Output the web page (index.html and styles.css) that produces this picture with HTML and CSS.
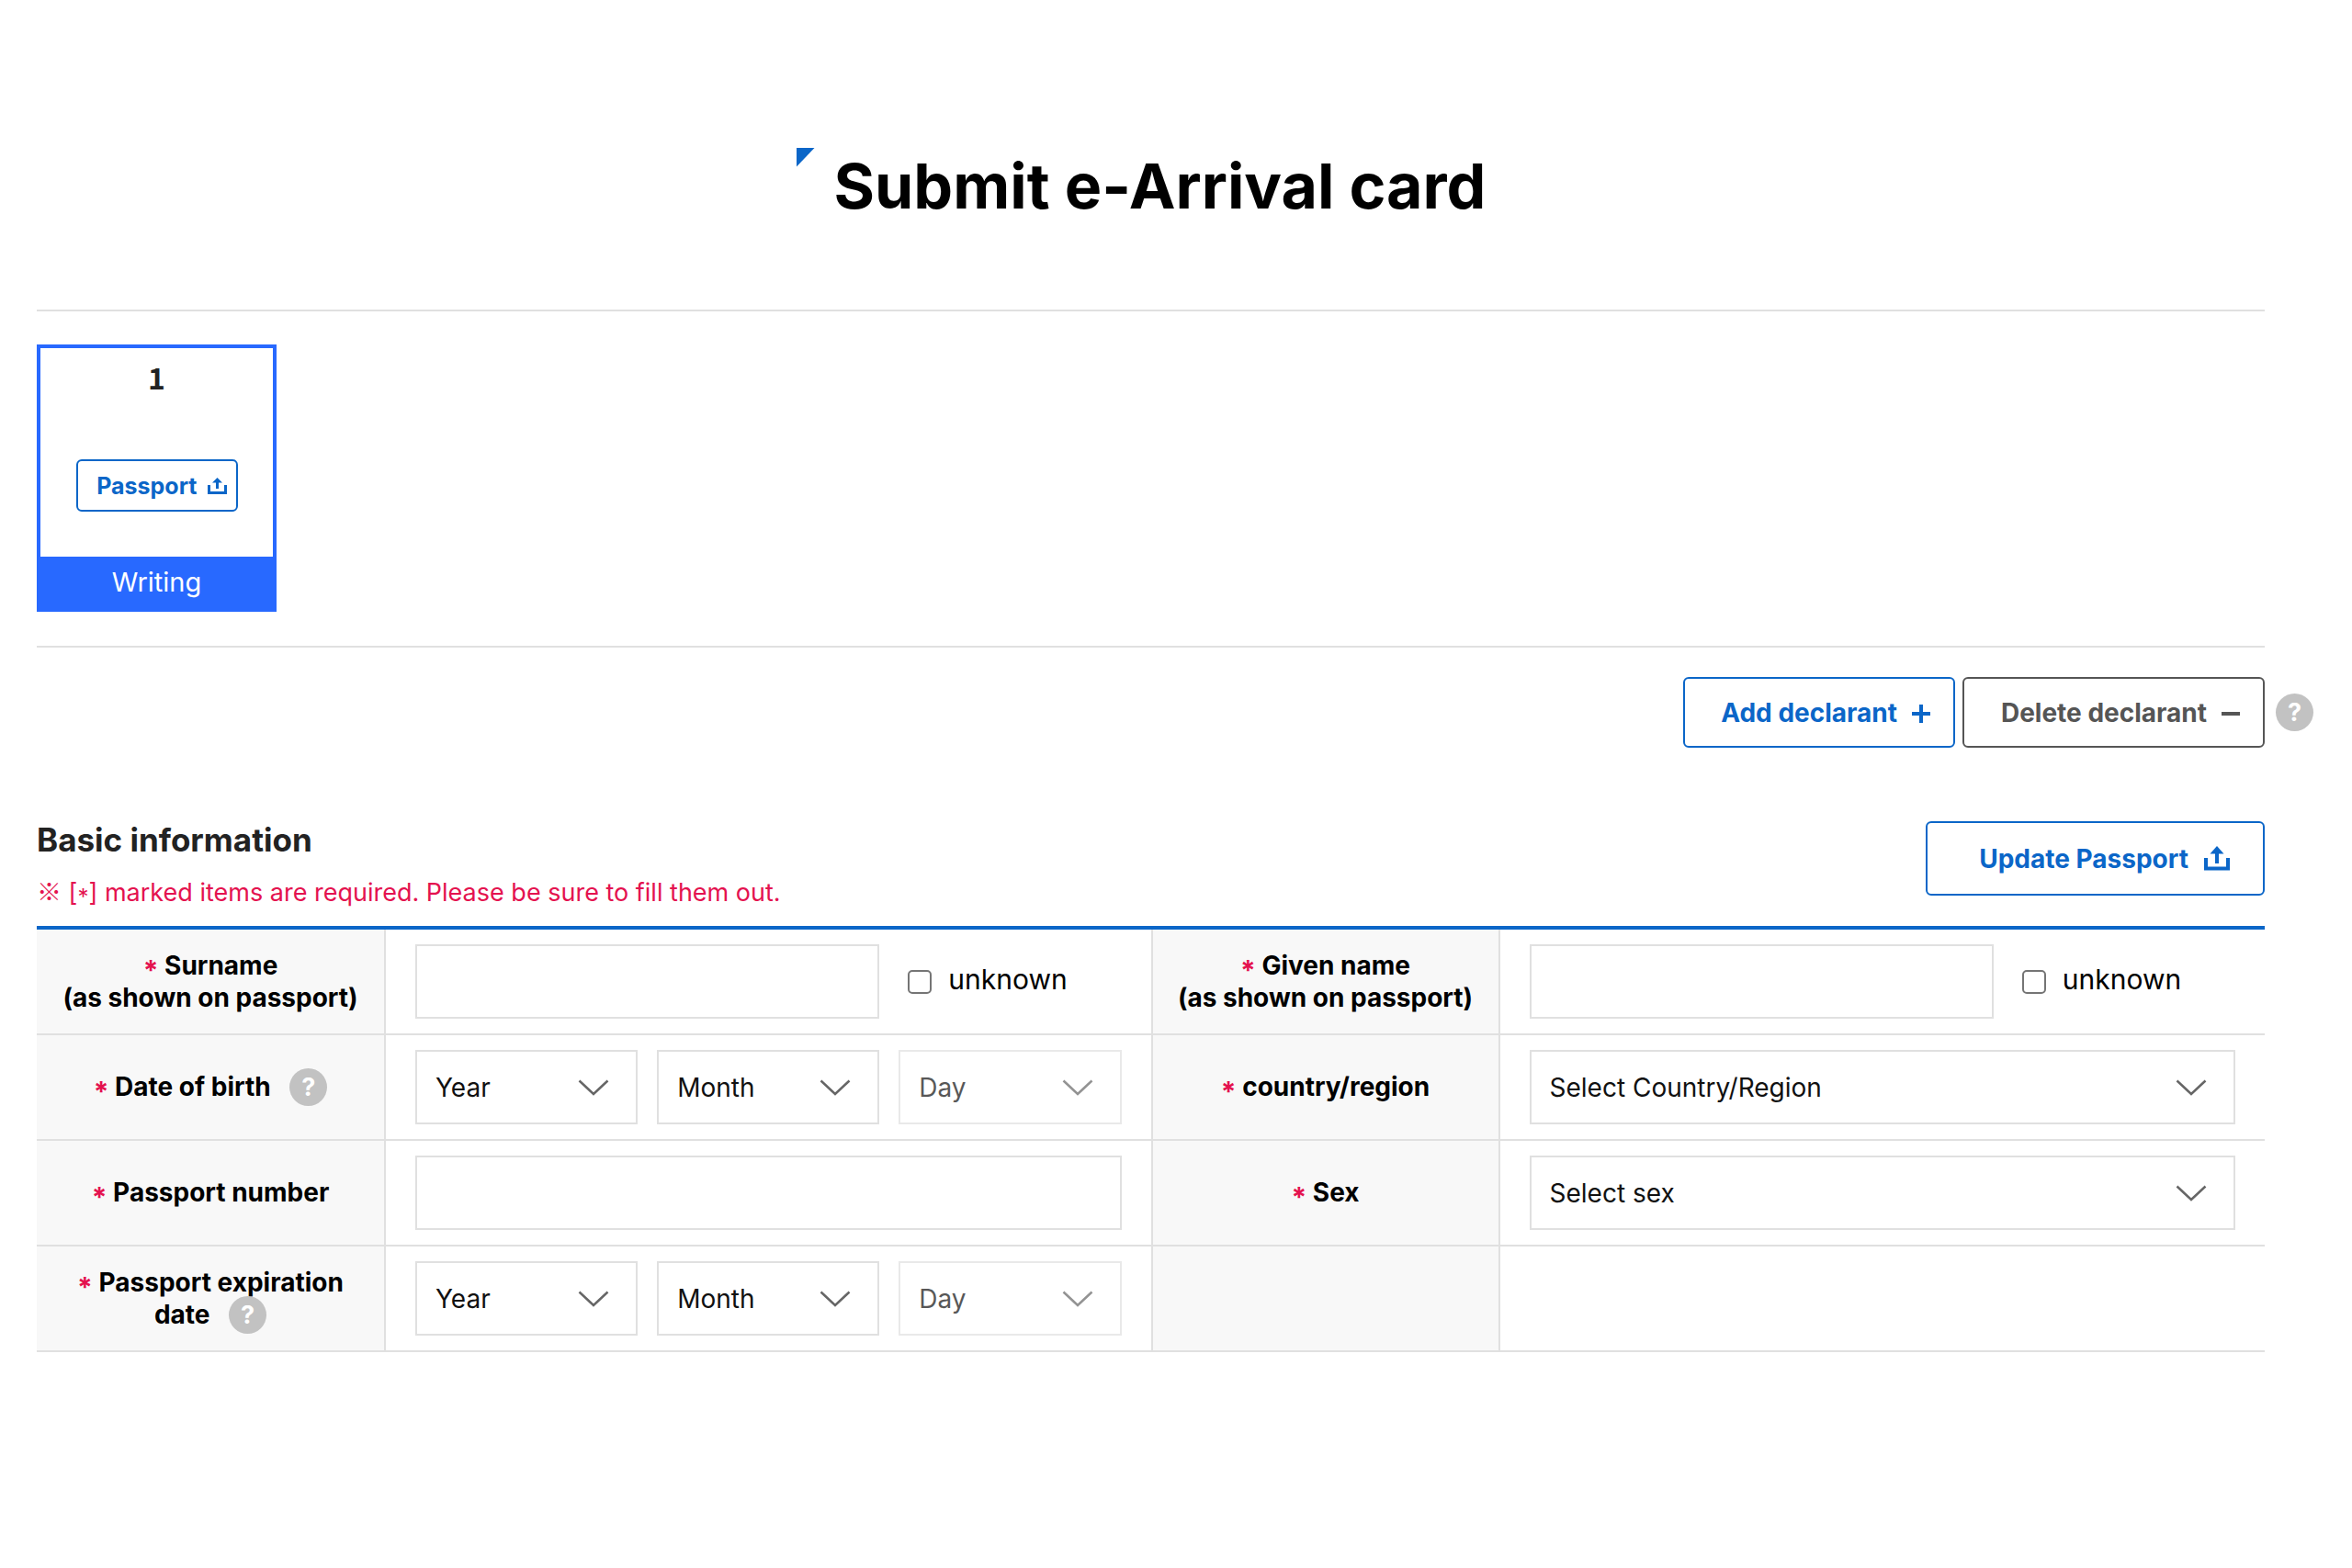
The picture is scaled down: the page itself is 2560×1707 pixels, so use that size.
FILE: index.html
```html
<!DOCTYPE html>
<html lang="en">
<head>
<meta charset="utf-8">
<meta name="viewport" content="width=device-width, initial-scale=1">
<title>Submit e-Arrival card</title>
<link rel="stylesheet" href="styles.css">
</head>
<body>
<main class="page">
  <header class="page-header">
    <h1 class="page-title">Submit e-Arrival card</h1>
  </header>

  <section class="declarants">
    <article class="declarant">
      <div class="declarant-body">
        <strong class="declarant-number">1</strong>
        <button type="button" class="btn btn-small">Passport
          <svg class="icon-upload-small" viewBox="0 0 21 18" aria-hidden="true"><path d="M1.5 8v8.500h18V8M10.500 12V3" fill="none" stroke="currentColor" stroke-width="3"/><path d="M5 5.500 10.500 0 16 5.500z" fill="currentColor"/></svg>
        </button>
      </div>
      <p class="declarant-status">Writing</p>
    </article>
  </section>

  <div class="toolbar">
    <button type="button" class="btn btn-add">Add declarant
      <svg class="icon-sign" viewBox="0 0 22 22" aria-hidden="true"><path d="M1 12h20M11 2v20" stroke="currentColor" stroke-width="4"/></svg>
    </button>
    <button type="button" class="btn btn-delete">Delete declarant
      <svg class="icon-sign" viewBox="0 0 22 22" aria-hidden="true"><path d="M1 12h20" stroke="currentColor" stroke-width="4"/></svg>
    </button>
    <button type="button" class="help" aria-label="Help with declarants">?</button>
  </div>

  <form>
    <div class="section-head">
      <div>
        <h2 class="section-title">Basic information</h2>
        <p class="section-note"><span class="note-mark">※</span> [<span class="note-star">*</span>] marked items are required. Please be sure to fill them out.</p>
      </div>
      <button type="button" class="btn btn-update">Update Passport
        <svg class="icon-upload" viewBox="0 0 30 28" aria-hidden="true"><path d="M3 13v11.500h24V13M15 19V4" fill="none" stroke="currentColor" stroke-width="4"/><path d="M7.500 8.500 15 0l7.500 8.500z" fill="currentColor"/></svg>
      </button>
    </div>

    <table class="form-table">
      <colgroup><col class="col-label"><col><col class="col-label"><col></colgroup>
      <tbody>
        <tr>
          <th scope="row"><label for="surname"><span class="star">*</span> Surname<br>(as shown on passport)</label></th>
          <td>
            <div class="fields">
              <input type="text" id="surname" class="control control-name">
              <label class="check"><input type="checkbox" class="checkbox"><span class="check-text">unknown</span></label>
            </div>
          </td>
          <th scope="row"><label for="given"><span class="star">*</span> Given name<br>(as shown on passport)</label></th>
          <td>
            <div class="fields">
              <input type="text" id="given" class="control control-name">
              <label class="check"><input type="checkbox" class="checkbox"><span class="check-text">unknown</span></label>
            </div>
          </td>
        </tr>
        <tr>
          <th scope="row"><label for="birth-year"><span class="star">*</span> Date of birth</label> <button type="button" class="help help-inline" aria-label="Help with date of birth">?</button></th>
          <td>
            <div class="fields">
              <select id="birth-year" class="control select"><option>Year</option></select>
              <select aria-label="Birth month" class="control select"><option>Month</option></select>
              <select aria-label="Birth day" class="control select" disabled><option>Day</option></select>
            </div>
          </td>
          <th scope="row"><label for="country"><span class="star">*</span> country/region</label></th>
          <td><select id="country" class="control select"><option>Select Country/Region</option></select></td>
        </tr>
        <tr>
          <th scope="row"><label for="passport-number"><span class="star">*</span> Passport number</label></th>
          <td><input type="text" id="passport-number" class="control"></td>
          <th scope="row"><label for="sex"><span class="star">*</span> Sex</label></th>
          <td><select id="sex" class="control select"><option>Select sex</option></select></td>
        </tr>
        <tr>
          <th scope="row"><label for="expiry-year"><span class="star">*</span> Passport expiration<br>date</label> <button type="button" class="help help-inline" aria-label="Help with expiration date">?</button></th>
          <td>
            <div class="fields">
              <select id="expiry-year" class="control select"><option>Year</option></select>
              <select aria-label="Expiration month" class="control select"><option>Month</option></select>
              <select aria-label="Expiration day" class="control select" disabled><option>Day</option></select>
            </div>
          </td>
          <th></th>
          <td></td>
        </tr>
      </tbody>
    </table>
  </form>
</main>
</body>
</html>
```
FILE: styles.css
```css
:root {
  --blue: #0b66c8;
  --bright: #2869ff;
  --line: #e0e0e0;
  --red: #e4124f;
  --font: Inter, "Noto Sans CJK KR", sans-serif;
}

* {
  box-sizing: border-box;
}

body {
  margin: 0;
  background: #fff;
  color: #111;
  font-family: var(--font);
  font-size: 28px;
}

h1, h2, p {
  margin: 0;
}

button, input, select {
  font-family: inherit;
  color: inherit;
}

.page {
  padding: 161px 95px 0 40px;
}

.page-header {
  padding-bottom: 94px;
  border-bottom: 2px solid var(--line);
  text-align: center;
}

.page-title {
  position: relative;
  display: inline-block;
  padding: 0 21px 0 41px;
  color: #000;
  font-size: 68px;
  font-weight: 700;
  line-height: 82px;
  vertical-align: top;
}

.page-title::before {
  content: "";
  position: absolute;
  top: 0;
  left: 0;
  width: 20px;
  height: 21px;
  background: var(--blue);
  clip-path: polygon(0 0, 100% 0, 0 100%);
}

.declarants {
  display: flex;
  padding: 36px 0 37px;
  border-bottom: 2px solid var(--line);
}

.declarant {
  width: 261px;
  background: var(--bright);
  border: 4px solid var(--bright);
}

.declarant-body {
  display: flex;
  flex-direction: column;
  align-items: center;
  gap: 72px;
  height: 227px;
  padding-top: 13px;
  background: #fff;
}

.declarant-number {
  color: #222;
  font-family: "Noto Sans CJK KR", sans-serif;
  font-size: 32px;
  font-weight: 700;
  line-height: 36px;
}

.declarant-status {
  color: #fff;
  font-size: 29px;
  line-height: 56px;
  text-align: center;
}

.btn {
  display: flex;
  align-items: center;
  justify-content: flex-end;
  background: #fff;
  border: 2px solid currentColor;
  border-radius: 6px;
  color: var(--blue);
  font-size: 28px;
  font-weight: 700;
  white-space: nowrap;
}

.btn-small {
  gap: 11px;
  width: 176px;
  height: 57px;
  padding: 0 10px;
  font-size: 25px;
}

.btn-add,
.btn-delete {
  gap: 15px;
  height: 77px;
  padding: 0 24px;
}

.btn-add {
  width: 296px;
}

.btn-delete {
  width: 329px;
  color: #555;
}

.btn-update {
  gap: 16px;
  width: 369px;
  height: 81px;
  padding: 0 35px;
}

.icon-upload-small {
  width: 21px;
  height: 18px;
}

.icon-upload {
  width: 30px;
  height: 28px;
}

.icon-sign {
  width: 22px;
  height: 22px;
}

.toolbar {
  display: flex;
  align-items: center;
  justify-content: flex-end;
  gap: 8px;
  margin-right: -53px;
  padding: 32px 0 80px;
}

.help {
  width: 41px;
  height: 41px;
  margin-left: 4px;
  padding: 0;
  background: #c2c2c2;
  border: 0;
  border-radius: 50%;
  color: #fff;
  font-size: 27px;
  font-weight: 700;
  line-height: 41px;
}

.help-inline {
  margin: -4px 0 -4px 14px;
  vertical-align: baseline;
}

.section-head {
  display: flex;
  align-items: flex-start;
  justify-content: space-between;
  padding-bottom: 18px;
}

.section-title {
  color: #222;
  font-size: 35px;
  font-weight: 700;
  line-height: 40px;
}

.section-note {
  margin-top: 20px;
  color: var(--red);
  font-size: 27px;
  line-height: 36px;
}

.note-mark {
  font-family: "Noto Sans CJK KR", sans-serif;
  line-height: 1;
}

.note-star {
  font-size: 24px;
  line-height: 1;
  vertical-align: -4px;
}

.star {
  color: var(--red);
  font-size: 30px;
  line-height: 0;
  vertical-align: -6px;
}

.form-table {
  width: 100%;
  table-layout: fixed;
  border-collapse: separate;
  border-spacing: 0;
  border-top: 4px solid var(--blue);
}

.col-label {
  width: 378px;
}

.form-table th,
.form-table td {
  height: 115px;
  border-bottom: 2px solid var(--line);
  border-left: 2px solid var(--line);
}

.form-table th:first-child {
  border-left: 0;
}

.form-table th {
  padding: 0 20px;
  background: #f8f8f8;
  color: #000;
  font-size: 28px;
  font-weight: 700;
  line-height: 35px;
}

.form-table td {
  padding: 0 32px;
}

.fields {
  display: grid;
  grid-template-columns: repeat(3, 1fr);
  gap: 21px;
}

.control {
  display: block;
  width: 100%;
  height: 81px;
  padding: 0 20px;
  background-color: #fff;
  border: 2px solid var(--line);
  border-radius: 0;
  font-size: 28px;
}

.control-name {
  grid-column: span 2;
}

.select {
  appearance: none;
  background-image: url("data:image/svg+xml,%3Csvg xmlns='http://www.w3.org/2000/svg' width='34' height='18' viewBox='0 0 34 18'%3E%3Cpath d='M1.500 1.500 17 16 32.500 1.500' fill='none' stroke='%23666' stroke-width='2.500'/%3E%3C/svg%3E");
  background-repeat: no-repeat;
  background-position: right 29px center;
}

.select:disabled {
  color: #111;
  opacity: .7;
}

.check {
  display: flex;
  align-items: center;
  gap: 18px;
  padding-left: 10px;
  color: #000;
  font-size: 30px;
}

.check-text {
  padding-bottom: 6px;
}

.checkbox {
  appearance: none;
  width: 26px;
  height: 26px;
  margin: 0;
  border: 2px solid #757575;
  border-radius: 5px;
}
```
